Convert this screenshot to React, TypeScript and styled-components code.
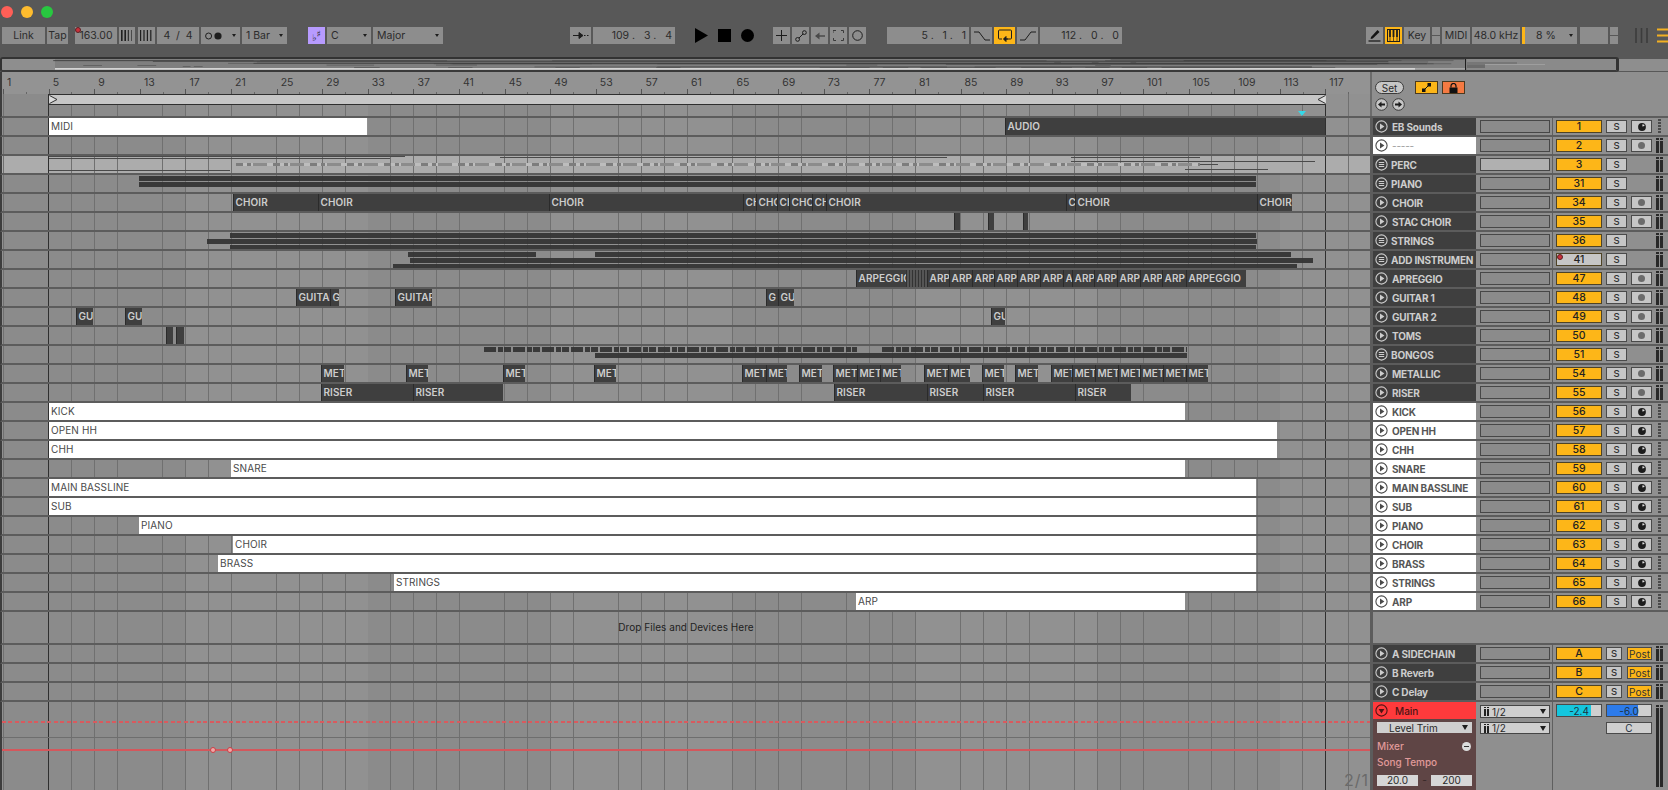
import React, { FC } from "react";
import styled, { createGlobalStyle, css } from "styled-components";

type ClipDef = { from: number; to: number; label?: string; dense?: boolean };
type NoteDef = { from: number; to: number; top: number; h: number; thin?: boolean };
type TrackDef = {
  name: string;
  num: string;
  icon: "play" | "group";
  white?: boolean;
  selected?: boolean;
  armed?: boolean;
  rec?: "note" | "dot";
  clips?: ClipDef[];
  notes?: NoteDef[];
  dashes?: { from: number; to: number; top: number; gaps?: boolean }[];
};

const LANE_X = 2;
const FONT = `Inter, "Liberation Sans", sans-serif`;

const chain = (stops: number[], labels: (string | undefined)[]): ClipDef[] =>
  labels.map((label, i) => ({ from: stops[i], to: stops[i + 1], label }));

const tracks: TrackDef[] = [
  { name: "EB Sounds", num: "1", icon: "play", rec: "note", clips: [{ from: 1005, to: 1325, label: "AUDIO" }] },
  { name: "-----", num: "2", icon: "play", white: true, rec: "dot" },
  {
    name: "PERC",
    num: "3",
    icon: "group",
    selected: true,
    notes: [
      { from: 49, to: 405, top: 0, h: 1, thin: true },
      { from: 49, to: 390, top: 2, h: 1, thin: true },
      { from: 49, to: 230, top: 14, h: 1, thin: true },
      { from: 500, to: 947, top: 1, h: 1, thin: true },
      { from: 1071, to: 1200, top: 1, h: 1, thin: true },
      { from: 1071, to: 1315, top: 5, h: 1, thin: true },
      { from: 1000, to: 1218, top: 8, h: 1, thin: true },
      { from: 1185, to: 1268, top: 13, h: 1, thin: true },
    ],
    dashes: [{ from: 236, to: 1200, top: 7 }],
  },
  {
    name: "PIANO",
    num: "31",
    icon: "group",
    notes: [
      { from: 139, to: 1256, top: 1, h: 5 },
      { from: 139, to: 1256, top: 7, h: 5 },
    ],
  },
  {
    name: "CHOIR",
    num: "34",
    icon: "play",
    rec: "dot",
    clips: chain(
      [233, 318, 549, 743, 756, 777, 789, 812, 826, 1066, 1075, 1257, 1292],
      ["CHOIR", "CHOIR", "CHOIR", "CH", "CHO", "CH", "CHO", "CH", "CHOIR", "C", "CHOIR", "CHOIR"]
    ),
  },
  {
    name: "STAC CHOIR",
    num: "35",
    icon: "play",
    rec: "dot",
    clips: [
      { from: 954, to: 960 },
      { from: 988, to: 994 },
      { from: 1023, to: 1028 },
    ],
  },
  {
    name: "STRINGS",
    num: "36",
    icon: "group",
    notes: [
      { from: 230, to: 1256, top: 1, h: 5 },
      { from: 207, to: 1257, top: 7, h: 5 },
      { from: 230, to: 1256, top: 13, h: 4 },
    ],
  },
  {
    name: "ADD INSTRUMEN",
    num: "41",
    icon: "group",
    armed: true,
    notes: [
      { from: 408, to: 536, top: 1, h: 5 },
      { from: 595, to: 1291, top: 1, h: 5 },
      { from: 410, to: 1313, top: 7, h: 5 },
      { from: 393, to: 1297, top: 13, h: 4 },
    ],
  },
  {
    name: "APREGGIO",
    num: "47",
    icon: "play",
    rec: "dot",
    clips: [
      { from: 856, to: 906, label: "ARPEGGIO" },
      { from: 906, to: 927, dense: true },
      ...chain(
        [927, 949, 972, 994, 1017, 1040, 1063, 1072, 1094, 1117, 1140, 1162, 1186, 1246],
        ["ARP", "ARP", "ARP", "ARP", "ARP", "ARP", "A", "ARP", "ARP", "ARP", "ARP", "ARP", "ARPEGGIO"]
      ),
    ],
  },
  {
    name: "GUITAR 1",
    num: "48",
    icon: "play",
    rec: "dot",
    clips: [
      { from: 296, to: 330, label: "GUITAR" },
      { from: 330, to: 339, label: "G" },
      { from: 395, to: 432, label: "GUITAR" },
      { from: 766, to: 778, label: "G" },
      { from: 778, to: 794, label: "GU" },
    ],
  },
  {
    name: "GUITAR 2",
    num: "49",
    icon: "play",
    rec: "dot",
    clips: [
      { from: 76, to: 93, label: "GU" },
      { from: 125, to: 142, label: "GU" },
      { from: 991, to: 1005, label: "GU" },
    ],
  },
  {
    name: "TOMS",
    num: "50",
    icon: "play",
    rec: "dot",
    clips: [
      { from: 166, to: 173 },
      { from: 176, to: 184 },
    ],
  },
  {
    name: "BONGOS",
    num: "51",
    icon: "group",
    notes: [{ from: 595, to: 1187, top: 7, h: 5 }],
    dashes: [
      { from: 484, to: 857, top: 1, gaps: true },
      { from: 882, to: 1187, top: 1, gaps: true },
    ],
  },
  {
    name: "METALLIC",
    num: "54",
    icon: "play",
    rec: "dot",
    clips: [
      { from: 321, to: 344, label: "MET" },
      { from: 406, to: 428, label: "MET" },
      { from: 503, to: 525, label: "MET" },
      { from: 594, to: 616, label: "MET" },
      ...chain([742, 766, 787], ["MET", "MET"]),
      { from: 799, to: 822, label: "MET" },
      ...chain([833, 857, 880, 901], ["MET", "MET", "MET"]),
      ...chain([924, 948, 970], ["MET", "MET"]),
      { from: 982, to: 1004, label: "MET" },
      { from: 1015, to: 1038, label: "MET" },
      ...chain(
        [1051, 1072, 1095, 1118, 1140, 1163, 1186, 1208],
        ["MET", "MET", "MET", "MET", "MET", "MET", "MET"]
      ),
    ],
  },
  {
    name: "RISER",
    num: "55",
    icon: "play",
    rec: "dot",
    clips: [
      ...chain([321, 413, 503], ["RISER", "RISER"]),
      ...chain([834, 927, 983, 1075, 1131], ["RISER", "RISER", "RISER", "RISER"]),
    ],
  },
  { name: "KICK", num: "56", icon: "play", white: true, rec: "note", clips: [{ from: 49, to: 1185, label: "KICK" }] },
  { name: "OPEN HH", num: "57", icon: "play", white: true, rec: "note", clips: [{ from: 49, to: 1277, label: "OPEN HH" }] },
  { name: "CHH", num: "58", icon: "play", white: true, rec: "note", clips: [{ from: 49, to: 1277, label: "CHH" }] },
  { name: "SNARE", num: "59", icon: "play", white: true, rec: "note", clips: [{ from: 231, to: 1185, label: "SNARE" }] },
  { name: "MAIN BASSLINE", num: "60", icon: "play", white: true, rec: "note", clips: [{ from: 49, to: 1256, label: "MAIN BASSLINE" }] },
  { name: "SUB", num: "61", icon: "play", white: true, rec: "note", clips: [{ from: 49, to: 1256, label: "SUB" }] },
  { name: "PIANO", num: "62", icon: "play", white: true, rec: "note", clips: [{ from: 139, to: 1256, label: "PIANO" }] },
  { name: "CHOIR", num: "63", icon: "play", white: true, rec: "note", clips: [{ from: 233, to: 1256, label: "CHOIR" }] },
  { name: "BRASS", num: "64", icon: "play", white: true, rec: "note", clips: [{ from: 218, to: 1256, label: "BRASS" }] },
  { name: "STRINGS", num: "65", icon: "play", white: true, rec: "note", clips: [{ from: 394, to: 1256, label: "STRINGS" }] },
  { name: "ARP", num: "66", icon: "play", white: true, rec: "note", clips: [{ from: 856, to: 1185, label: "ARP" }] },
];

const rulerBars = Array.from({ length: 30 }, (_, i) => 1 + i * 4);

const GlobalStyle = createGlobalStyle`
  html, body {
    margin: 0;
    background: #585858;
    overflow: hidden;
  }
  * {
    box-sizing: border-box;
  }
`;

const Page = styled.div`
  width: 1668px;
  height: 790px;
  display: flex;
  flex-direction: column;
  background: #585858;
  font-family: ${FONT};
  font-size: 10px;
  color: #2a2a2a;
  overflow: hidden;
`;

const TitleBar = styled.div`
  height: 27px;
  flex: none;
  display: flex;
  gap: 8px;
  padding: 6px 0 0 1px;
`;

const Light = styled.span<{ $color: string }>`
  width: 12px;
  height: 12px;
  border-radius: 50%;
  background: ${(p) => p.$color};
`;

const Toolbar = styled.div`
  height: 30px;
  flex: none;
  display: flex;
  align-items: flex-start;
  gap: 2px;
  padding-left: 2px;
`;

const Btn = styled.div<{ $w: number; $ml?: number; $on?: boolean; $bare?: boolean; $right?: boolean; $split?: boolean }>`
  position: relative;
  flex: none;
  width: ${(p) => p.$w}px;
  height: 17px;
  margin-left: ${(p) => p.$ml ?? 0}px;
  display: flex;
  align-items: center;
  justify-content: ${(p) => (p.$right ? "flex-end" : "center")};
  padding-right: ${(p) => (p.$right ? 3 : 0)}px;
  background: ${(p) => (p.$bare ? "transparent" : p.$on ? "#fdb618" : "#8d8d8d")};
  color: #2b2b2b;
  font-size: 10.5px;
  white-space: pre;
  ${(p) =>
    p.$split &&
    css`
      background: linear-gradient(#8d8d8d 0 8px, #585858 8px 9px, #8d8d8d 9px);
    `}
`;

const KeyBtn = styled(Btn)`
  background: #b79bff;
  color: #222;
  font-family: "DejaVu Sans", sans-serif;
  font-size: 9px;
  font-weight: 700;
`;

const KeyGlyph = styled.span<{ $up?: boolean }>`
  transform: translateY(${(p) => (p.$up ? -2 : 2)}px);
`;

const DropBtn = styled(Btn)`
  justify-content: space-between;
  padding: 0 4px;
`;

const Caret = styled.span`
  width: 0;
  height: 0;
  border-left: 2.5px solid transparent;
  border-right: 2.5px solid transparent;
  border-top: 3.5px solid #1d1d1d;
`;

const RedDot = styled.span`
  position: absolute;
  left: 0;
  top: 0;
  width: 6px;
  height: 6px;
  border-radius: 50%;
  background: #c8303a;
  border: 1px solid #5b2024;
`;

const CpuStrip = styled.span`
  position: absolute;
  left: 0;
  top: 0;
  width: 3px;
  height: 17px;
  background: #fdb618;
`;

const Overview = styled.div`
  height: 15px;
  flex: none;
  display: flex;
`;

const OverviewTrack = styled.div`
  width: 1619px;
  height: 15px;
  background: #7f7f7f;
  border: 2px solid #333;
  border-right-width: 3px;
  border-radius: 3px;
  border-bottom-color: #3a3a3a;
  overflow: hidden;
`;

const OverviewTail = styled.div`
  flex: 1;
  margin: 2px 0 1px;
  background: #8e8e8e;
`;

const TopArea = styled.div`
  height: 46px;
  flex: none;
  display: flex;
  border-bottom: 2px solid #5c5c5c;
  border-left: 2px solid #3d3d3d;
`;

const TopLeft = styled.div`
  width: 1368px;
  flex: none;
  display: flex;
  flex-direction: column;
`;

const Ruler = styled.div`
  height: 22px;
  flex: none;
  display: flex;
  align-items: flex-end;
  padding-left: 1.1px;
  background: #939393;
`;

const RulerMark = styled.div`
  position: relative;
  flex: 0 0 45.6px;
  height: 17px;
  padding-left: 4px;
  line-height: 12px;
  font-size: 10.5px;
  color: #333;
  &::before {
    content: "";
    position: absolute;
    left: 0;
    bottom: 0;
    width: 1px;
    height: 5px;
    background: #555;
  }
  &::after {
    content: "";
    position: absolute;
    left: 22.8px;
    bottom: 0;
    width: 1px;
    height: 2px;
    background: #666;
  }
`;

const Lane = styled.div<{ $selected?: boolean; $h?: number }>`
  position: relative;
  flex: none;
  width: 1368px;
  height: ${(p) => (p.$h ? `${p.$h}px` : "100%")};
  background-image: linear-gradient(90deg, transparent 46.4px, #2f2f2f 46.4px 47.4px, transparent 47.4px 1323.2px, #2f2f2f 1323.2px 1324.2px, transparent 1324.2px),
    repeating-linear-gradient(90deg, transparent 0 0.8px, #707070 0.8px 1.6px, transparent 1.6px 22.8px),
    ${(p) =>
      p.$selected
        ? "linear-gradient(#acacac, #acacac)"
        : "repeating-linear-gradient(90deg, #8b8b8b 1.1px, #8b8b8b 183.5px, #919191 183.5px, #919191 365.9px)"};
`;

const LoopBar = styled.div`
  position: absolute;
  left: 46.7px;
  top: 0;
  width: 1277px;
  height: 11px;
  background: #c6c6c6;
  border-top: 1px solid #2f2f2f;
  border-bottom: 1px solid #2f2f2f;
  display: flex;
  align-items: center;
  justify-content: space-between;
`;

const CueMarker = styled.span`
  position: absolute;
  left: 1296px;
  top: 17px;
  width: 0;
  height: 0;
  border-left: 4px solid transparent;
  border-right: 4px solid transparent;
  border-top: 5px solid #35d8e8;
`;

const TopRight = styled.div`
  flex: 1;
  background: #8f8f8f;
  border-left: 2px solid #6c6c6c;
  padding: 9px 0 0 3px;
`;

const ControlRow = styled.div`
  display: flex;
  align-items: center;
  height: 13px;
`;

const SetBtn = styled.div`
  width: 29px;
  height: 13px;
  border-radius: 7px;
  border: 1px solid #3a3a3a;
  background: #c6c6c6;
  display: flex;
  align-items: center;
  justify-content: center;
  font-size: 10px;
`;

const SquareBtn = styled.div<{ $bg: string; $ml: number }>`
  width: 23px;
  height: 13px;
  margin-left: ${(p) => p.$ml}px;
  border: 1px solid #4a3a20;
  background: ${(p) => p.$bg};
  display: flex;
  align-items: center;
  justify-content: center;
`;

const ArrowRow = styled(ControlRow)`
  gap: 4px;
  margin-top: 4px;
`;

const Row = styled.div<{ $h?: number }>`
  display: flex;
  flex: none;
  height: ${(p) => p.$h ?? 19}px;
  border-bottom: 2px solid #5c5c5c;
  border-left: 2px solid #3d3d3d;
`;

const Panel = styled.div`
  flex: 1;
  display: flex;
  align-items: center;
  background: #8f8f8f;
  border-left: 3px solid #5c5c5c;
`;

const Head = styled.div<{ $white?: boolean }>`
  flex: none;
  width: 103px;
  height: 100%;
  display: flex;
  align-items: center;
  gap: 3px;
  padding-left: 2px;
  background: ${(p) => (p.$white ? "#fff" : "#3f3f3f")};
  color: ${(p) => (p.$white ? "#565656" : "#cdcdcd")};
  font-size: 10px;
  font-weight: 700;
  letter-spacing: -0.2px;
  white-space: nowrap;
  overflow: hidden;
`;

const HeadName = styled.span<{ $group?: boolean; $dim?: boolean }>`
  margin-left: ${(p) => (p.$group ? 0 : 1)}px;
  ${(p) =>
    p.$dim &&
    css`
      color: #9a9a9a;
      font-weight: 400;
    `}
`;

const Inset = styled.div<{ $selected?: boolean }>`
  flex: none;
  width: 70px;
  height: 13px;
  margin-left: 4px;
  background: ${(p) => (p.$selected ? "#b0b0b0" : "#8b8b8b")};
  border: 1px solid #474747;
`;

const ColumnRule = styled.span`
  flex: none;
  align-self: stretch;
  width: 1px;
  margin: 0 3px 0 2px;
  background: #5f5f5f;
`;

const TrackNum = styled.div<{ $off?: boolean }>`
  position: relative;
  flex: none;
  width: 46px;
  height: 13px;
  display: flex;
  align-items: center;
  justify-content: center;
  background: ${(p) => (p.$off ? "#c6c6c6" : "#fdb618")};
  border: 1px solid #4e4326;
  color: #222;
  font-size: 10.5px;
  font-weight: 500;
`;

const SoloBtn = styled.div<{ $w?: number }>`
  flex: none;
  width: ${(p) => p.$w ?? 21}px;
  height: 13px;
  margin-left: 4px;
  display: flex;
  align-items: center;
  justify-content: center;
  background: #c6c6c6;
  border: 1px solid #4a4a4a;
  color: #333;
  font-size: 9.5px;
  font-weight: 500;
`;

const RecBtn = styled(SoloBtn)``;

const NoRec = styled.span`
  flex: none;
  width: 21px;
  margin-left: 4px;
`;

const PostBtn = styled(SoloBtn)`
  margin-left: 5px;
  background: #fdb618;
  font-size: 10px;
  font-weight: 400;
`;

const RecDot = styled.span`
  width: 7px;
  height: 7px;
  border-radius: 50%;
  background: #6b6b6b;
`;

const Grip = styled.div<{ $h?: number }>`
  flex: none;
  width: 7px;
  height: ${(p) => p.$h ?? 15}px;
  margin-left: 4px;
  display: flex;
  justify-content: space-between;
`;

const GripBar = styled.span`
  width: 3px;
  height: 100%;
  background: linear-gradient(#282828 0 2px, transparent 2px 3px, #282828 3px);
`;

const GripDots = styled.span`
  width: 3px;
  height: 100%;
  margin: 0 auto;
  background: repeating-linear-gradient(#4a4a4a 0 2px, transparent 2px 3px);
`;

const ClipBox = styled.div<{ $white?: boolean; $dense?: boolean }>`
  position: absolute;
  top: 0;
  height: 17px;
  padding-left: ${(p) => (p.$white ? 2 : 1.5)}px;
  line-height: 17px;
  overflow: hidden;
  white-space: nowrap;
  font-size: 10px;
  letter-spacing: 0.1px;
  background: ${(p) => (p.$white ? "#fff" : "#3f3f3f")};
  color: ${(p) => (p.$white ? "#4a4a4a" : "#cdcdcd")};
  font-weight: ${(p) => (p.$white ? 400 : 600)};
  border-left: ${(p) => (p.$white ? "none" : "1px solid #2b2b2b")};
  ${(p) =>
    p.$dense &&
    css`
      background: repeating-linear-gradient(90deg, #333 0 1px, #555 1px 3px);
      border-left: none;
    `}
`;

const NoteBar = styled.div<{ $thin?: boolean }>`
  position: absolute;
  background: ${(p) => (p.$thin ? "#4a4a4a" : "rgba(50, 50, 50, 0.92)")};
`;

const DashBar = styled.div<{ $gaps?: boolean }>`
  position: absolute;
  height: ${(p) => (p.$gaps ? 5 : 3)}px;
  background: ${(p) =>
    p.$gaps
      ? "repeating-linear-gradient(90deg, rgba(50,50,50,.92) 0 12px, transparent 12px 14px, rgba(50,50,50,.92) 14px 19px, transparent 19px 20px, rgba(50,50,50,.92) 20px 27px, transparent 27px 29px)"
      : "repeating-linear-gradient(90deg, #7d7d7d 0 7px, #bdbdbd 7px 11px, #7d7d7d 11px 15px, #bdbdbd 15px 17px, #8c8c8c 17px 31px, #bdbdbd 31px 37px)"};
`;

const DropZone = styled(Lane)`
  display: flex;
  align-items: center;
  justify-content: center;
  padding-bottom: 1px;
  color: #222;
  font-size: 10px;
  letter-spacing: 0.05px;
`;

const DropPanel = styled.div`
  flex: 1;
  background: #8f8f8f;
  border-left: 3px solid #5c5c5c;
`;

const MasterRow = styled.div`
  display: flex;
  flex: 1;
  min-height: 0;
  border-left: 2px solid #3d3d3d;
`;

const MasterPanel = styled.div`
  flex: 1;
  display: flex;
  background: #8f8f8f;
  border-left: 3px solid #5c5c5c;
`;

const MasterHeadCol = styled.div`
  flex: none;
  width: 103px;
  display: flex;
  flex-direction: column;
`;

const MainHead = styled.div`
  height: 17px;
  flex: none;
  display: flex;
  align-items: center;
  gap: 7px;
  padding-left: 2px;
  background: #ff3a3c;
  color: #4d1414;
  font-size: 10px;
  font-weight: 500;
`;

const Device = styled.div`
  flex: 1;
  display: flex;
  flex-direction: column;
  padding: 3px 4px 0;
  background: #5f4545;
  color: #e19a9a;
  font-size: 10px;
  font-weight: 500;
`;

const Select = styled.div<{ $h?: number }>`
  flex: none;
  width: 100%;
  height: ${(p) => p.$h ?? 12}px;
  display: flex;
  align-items: center;
  justify-content: space-between;
  padding: 0 3px;
  background: #cfcfcf;
  border: 1px solid #454545;
  color: #2a2a2a;
  font-size: 10px;
  font-weight: 400;
`;

const LevelSelect = styled(Select)`
  padding-left: 11px;
  border-color: transparent;
  height: 11px;
`;

const BlackCaret = styled(Caret)`
  border-left-width: 3.5px;
  border-right-width: 3.5px;
  border-top-width: 5px;
`;

const DeviceLine = styled.div<{ $mt: number }>`
  margin-top: ${(p) => p.$mt}px;
  height: 12px;
  line-height: 12px;
  display: flex;
  justify-content: space-between;
  align-items: center;
`;

const MinusBtn = styled.span`
  position: relative;
  width: 9px;
  height: 9px;
  margin-right: 1px;
  border-radius: 50%;
  background: #dcdcdc;
  &::after {
    content: "";
    position: absolute;
    left: 2px;
    right: 2px;
    top: 4px;
    height: 1px;
    background: #333;
  }
`;

const RangeRow = styled.div`
  margin-top: 6px;
  display: flex;
  align-items: center;
  justify-content: space-between;
  color: #3a2a2a;
`;

const RangeBox = styled.div`
  width: 41px;
  height: 11px;
  display: flex;
  align-items: center;
  justify-content: center;
  background: #d6d6d6;
  color: #2a2a2a;
  font-size: 10px;
  font-weight: 400;
`;

const RouteCol = styled.div`
  flex: none;
  width: 70px;
  margin-left: 4px;
  display: flex;
  flex-direction: column;
  gap: 4px;
  padding-top: 3px;
`;

const RouteLabel = styled.span`
  display: flex;
  align-items: center;
  gap: 3px;
`;

const TwinBars = styled.span`
  width: 5px;
  height: 9px;
  display: flex;
  justify-content: space-between;
  &::before,
  &::after {
    content: "";
    width: 2px;
    background: linear-gradient(#222 0 1px, transparent 1px 2px, #222 2px);
  }
`;

const MeterCol = styled.div`
  flex: none;
  width: 96px;
  padding-top: 2px;
  display: grid;
  grid-template-columns: 46px 46px;
  grid-template-rows: 13px 12px;
  column-gap: 4px;
  row-gap: 5px;
`;

const ValueBox = styled.div<{ $fill?: string; $pct?: number }>`
  display: flex;
  align-items: center;
  justify-content: center;
  border: 1px solid #4a4a4a;
  color: #1f3340;
  font-size: 10px;
  background: ${(p) =>
    p.$fill
      ? `linear-gradient(90deg, ${p.$fill} ${p.$pct}%, #cfcfcf ${p.$pct}%)`
      : "#cfcfcf"};
`;

const MasterGrip = styled(Grip)`
  margin-top: 3px;
  align-self: flex-start;
`;

const RedDash = styled.div`
  position: absolute;
  left: 0;
  right: 0;
  top: 19px;
  height: 1.5px;
  background: repeating-linear-gradient(90deg, #d95a5e 0 4px, transparent 4px 6.5px);
`;

const ThinLine = styled.div`
  position: absolute;
  left: 0;
  right: 0;
  top: 35px;
  height: 1px;
  background: #6e6e6e;
`;

const RedLine = styled.div`
  position: absolute;
  left: 0;
  right: 0;
  top: 47px;
  height: 2px;
  background: #d4575c;
`;

const Breakpoint = styled.span`
  position: absolute;
  top: -2px;
  width: 6px;
  height: 6px;
  border-radius: 50%;
  background: #f0a8a8;
  border: 1.5px solid #c93f46;
`;

const GridLabel = styled.div`
  position: absolute;
  right: 1px;
  top: 69px;
  font-size: 16px;
  letter-spacing: 1px;
  line-height: 18px;
  color: #6a6a6a;
`;

const RoundIcon: FC<{ kind: "play" | "group"; color: string }> = ({ kind, color }) => (
  <svg width="13" height="13" viewBox="0 0 13 13" style={{ flex: "none" }}>
    <circle cx="6.5" cy="6.5" r="5.6" fill="none" stroke={color} strokeWidth="1.1" />
    {kind === "play" ? (
      <path d="M5 3.6 L9.4 6.5 L5 9.4 Z" fill={color} />
    ) : (
      <path d="M3.8 4.5 H9.2 M3.8 6.5 H9.2 M3.8 8.5 H9.2" stroke={color} strokeWidth="1" fill="none" />
    )}
  </svg>
);

const NoteIcon = () => (
  <svg width="8" height="8" viewBox="0 0 8 8">
    <circle cx="4" cy="4" r="3.9" fill="#1c1c1c" />
    <path d="M4.4 1.2 V3.6 L6.4 3 V1.8 Z" fill="#dedede" />
  </svg>
);

const NavIcon: FC<{ dir: "left" | "right" }> = ({ dir }) => (
  <svg width="13" height="13" viewBox="0 0 13 13">
    <circle cx="6.5" cy="6.5" r="5.8" fill="#c6c6c6" stroke="#3a3a3a" />
    <path
      d={dir === "left" ? "M3 6.5 L6.5 3.5 V5.5 H10 V7.5 H6.5 V9.5 Z" : "M10 6.5 L6.5 3.5 V5.5 H3 V7.5 H6.5 V9.5 Z"}
      fill="#1c1c1c"
    />
  </svg>
);

const Bars: FC<{ weights: number[] }> = ({ weights }) => (
  <svg width="13" height="11" viewBox="0 0 13 11">
    {weights.map((w, i) => (
      <rect key={i} x={i * 3.4} y="0" width={w} height="11" fill="#1f1f1f" />
    ))}
  </svg>
);

const OverviewMap = () => {
  const ox = (x: number) => 53 + (x - 48.7) * 1.106 - 2;
  const rects: React.ReactNode[] = [];
  tracks.forEach((t, i) => {
    if (t.white) return;
    const y = i * 0.62 + 0.2;
    [...(t.clips ?? []), ...(t.notes ?? []), ...(t.dashes ?? [])].forEach((c, j) => {
      rects.push(
        <rect
          key={`${i}-${j}`}
          x={ox(c.from)}
          y={y}
          width={Math.max(1, (c.to - c.from) * 1.106)}
          height="0.6"
          fill="#3f3f3f"
          opacity="0.7"
        />
      );
    });
  });
  return (
    <svg width="1614" height="11" viewBox="0 0 1614 11" style={{ display: "block" }}>
      <rect x="0" y="0" width="53" height="11" fill="#8e8e8e" />
      {rects}
      <rect x="53" y="9.2" width="1360" height="1.4" fill="#e8e8e8" />
      <rect x="1413" y="9.4" width="50" height="1" fill="#bdbdbd" />
      <rect x="1465" y="0" width="150" height="11" fill="#8a8a8a" />
      <rect x="1465" y="3" width="50" height="3" fill="#777" />
      <rect x="1465" y="6" width="18" height="3" fill="#6c6c6c" />
      <rect x="1483" y="5" width="60" height="1" fill="#9e9e9e" />
      <rect x="1463" y="0" width="1" height="11" fill="#1e1e1e" />
    </svg>
  );
};

const TrackLane: FC<{ track: TrackDef }> = ({ track }) => (
  <Lane $selected={track.selected}>
    {track.notes?.map((n, i) => (
      <NoteBar
        key={i}
        $thin={n.thin}
        style={{ left: n.from - LANE_X, width: n.to - n.from, top: n.top, height: n.h }}
      />
    ))}
    {track.dashes?.map((d, i) => (
      <DashBar key={i} $gaps={d.gaps} style={{ left: d.from - LANE_X, width: d.to - d.from, top: d.top }} />
    ))}
    {track.clips?.map((c, i) => (
      <ClipBox key={i} $white={track.white} $dense={c.dense} style={{ left: c.from - LANE_X, width: c.to - c.from }}>
        {c.label}
      </ClipBox>
    ))}
    {track.name === "EB Sounds" && (
      <ClipBox $white style={{ left: 49 - LANE_X, width: 318 }}>
        MIDI
      </ClipBox>
    )}
  </Lane>
);

const TrackRow: FC<{ track: TrackDef }> = ({ track }) => (
  <Row>
    <TrackLane track={track} />
    <Panel>
      <Head $white={track.white}>
        <RoundIcon kind={track.icon} color={track.white ? "#4a4a4a" : "#cdcdcd"} />
        <HeadName $group={track.icon === "group"} $dim={track.name === "-----"}>
          {track.name}
        </HeadName>
      </Head>
      <Inset $selected={track.selected} />
      <ColumnRule />
      <TrackNum $off={track.armed}>
        {track.armed && <RedDot />}
        {track.num}
      </TrackNum>
      <SoloBtn>S</SoloBtn>
      {track.rec ? <RecBtn>{track.rec === "note" ? <NoteIcon /> : <RecDot />}</RecBtn> : <NoRec />}
      <Grip>
        {track.rec === "note" ? (
          <GripDots />
        ) : (
          <>
            <GripBar />
            <GripBar />
          </>
        )}
      </Grip>
    </Panel>
  </Row>
);

const ReturnRow: FC<{ name: string; letter: string }> = ({ name, letter }) => (
  <Row>
    <Lane />
    <Panel>
      <Head>
        <RoundIcon kind="play" color="#cdcdcd" />
        <HeadName>{name}</HeadName>
      </Head>
      <Inset />
      <ColumnRule />
      <TrackNum>{letter}</TrackNum>
      <SoloBtn $w={16}>S</SoloBtn>
      <PostBtn $w={25}>Post</PostBtn>
      <Grip>
        <GripBar />
        <GripBar />
      </Grip>
    </Panel>
  </Row>
);

export default function App() {
  return (
    <Page>
      <GlobalStyle />
      <TitleBar>
        <Light $color="#ff5f57" />
        <Light $color="#febc2e" />
        <Light $color="#28c840" />
      </TitleBar>

      <Toolbar>
        <Btn $w={43}>Link</Btn>
        <Btn $w={21}>Tap</Btn>
        <Btn $w={42} $ml={5}>
          <RedDot />
          163.00
        </Btn>
        <Btn $w={16}>
          <Bars weights={[1.6, 1.6, 1, 0.6]} />
        </Btn>
        <Btn $w={17} $ml={1}>
          <Bars weights={[1.2, 1.2, 1.2, 1.2]} />
        </Btn>
        <Btn $w={42}>4  /  4</Btn>
        <DropBtn $w={39}>
          <svg width="18" height="8" viewBox="0 0 18 8">
            <circle cx="3.6" cy="4" r="3" fill="none" stroke="#1f1f1f" />
            <circle cx="13" cy="4" r="3.6" fill="#1f1f1f" />
          </svg>
          <Caret />
        </DropBtn>
        <DropBtn $w={45}>
          1 Bar
          <Caret />
        </DropBtn>
        <KeyBtn $w={17} $ml={19}>
          <KeyGlyph>♭</KeyGlyph>
          <KeyGlyph $up>♯</KeyGlyph>
        </KeyBtn>
        <DropBtn $w={44}>
          C
          <Caret />
        </DropBtn>
        <DropBtn $w={70}>
          Major
          <Caret />
        </DropBtn>

        <Btn $w={21} $ml={125}>
          <svg width="16" height="9" viewBox="0 0 16 9">
            <path d="M0 4.5 H6 M6 1.5 L10 4.5 L6 7.5 Z" fill="#1d1d1d" stroke="#1d1d1d" />
            <path d="M11 4.5 H16" stroke="#1d1d1d" strokeDasharray="1.5 1.5" />
          </svg>
        </Btn>
        <Btn $w={82} $right>
          109 .   3 .   4
        </Btn>
        <Btn $w={13} $ml={18} $bare>
          <svg width="13" height="15" viewBox="0 0 13 15">
            <path d="M0 0 L13 7.5 L0 15 Z" fill="#000" />
          </svg>
        </Btn>
        <Btn $w={13} $ml={8} $bare>
          <svg width="13" height="13" viewBox="0 0 13 13">
            <rect width="13" height="13" fill="#000" />
          </svg>
        </Btn>
        <Btn $w={13} $ml={8} $bare>
          <svg width="13" height="13" viewBox="0 0 13 13">
            <circle cx="6.5" cy="6.5" r="6.5" fill="#000" />
          </svg>
        </Btn>
        <Btn $w={17} $ml={17}>
          <svg width="11" height="11" viewBox="0 0 11 11">
            <path d="M5.5 0 V11 M0 5.5 H11" stroke="#1d1d1d" />
          </svg>
        </Btn>
        <Btn $w={17}>
          <svg width="12" height="12" viewBox="0 0 12 12">
            <circle cx="2.6" cy="9.4" r="1.9" fill="none" stroke="#1d1d1d" />
            <circle cx="9.4" cy="2.6" r="1.9" fill="none" stroke="#1d1d1d" />
            <path d="M4 8 L8 4" stroke="#1d1d1d" />
          </svg>
        </Btn>
        <Btn $w={17}>
          <svg width="10" height="8" viewBox="0 0 10 8">
            <path d="M0 4 L4.5 0.5 V3.3 H10 V4.7 H4.5 V7.5 Z" fill="#4a4a4a" />
          </svg>
        </Btn>
        <Btn $w={17}>
          <svg width="11" height="11" viewBox="0 0 11 11">
            <path d="M0 3 V0.5 H3 M8 0.5 H10.5 V3 M10.5 8 V10.5 H8 M3 10.5 H0.5 V8" fill="none" stroke="#3a3a3a" />
          </svg>
        </Btn>
        <Btn $w={17}>
          <svg width="11" height="11" viewBox="0 0 11 11">
            <circle cx="5.5" cy="5.5" r="4.8" fill="none" stroke="#1d1d1d" />
          </svg>
        </Btn>
        <Btn $w={82} $ml={19} $right>
          5 .   1 .   1
        </Btn>
        <Btn $w={21}>
          <svg width="16" height="10" viewBox="0 0 16 10">
            <path d="M0 1 H5 L11 9 H16" fill="none" stroke="#1d1d1d" />
          </svg>
        </Btn>
        <Btn $w={21} $on>
          <svg width="14" height="13" viewBox="0 0 14 13">
            <path d="M4 10 H1.5 Q0.5 10 0.5 9 V2 Q0.5 1 1.5 1 H12.5 Q13.5 1 13.5 2 V9 Q13.5 10 12.5 10 H8" fill="none" stroke="#1d1d1d" />
            <path d="M10 10 H6 M8 7.5 L5.5 10 L8 12.5 Z" fill="#1d1d1d" stroke="#1d1d1d" />
          </svg>
        </Btn>
        <Btn $w={21}>
          <svg width="16" height="10" viewBox="0 0 16 10">
            <path d="M0 9 H5 L11 1 H16" fill="none" stroke="#1d1d1d" />
          </svg>
        </Btn>
        <Btn $w={82} $right>
          112 .   0 .   0
        </Btn>
        <Btn $w={17} $ml={242}>
          <svg width="13" height="13" viewBox="0 0 13 13">
            <path d="M3 8 L9.5 1 L11.5 3 L4.8 9.6 L2.6 10 Z" fill="#141414" />
            <path d="M0.5 12 H12.5" stroke="#141414" strokeWidth="1.2" />
          </svg>
        </Btn>
        <Btn $w={17} $on>
          <svg width="13" height="13" viewBox="0 0 13 13">
            <rect x="0.5" y="0.5" width="12" height="12" fill="none" stroke="#1d1d1d" />
            <path d="M3 1 V8 M6.5 1 V8 M10 1 V8" stroke="#1d1d1d" strokeWidth="1.8" />
            <path d="M3 8 V12 M6.5 8 V12 M10 8 V12" stroke="#1d1d1d" strokeWidth="0.7" />
          </svg>
        </Btn>
        <Btn $w={26}>Key</Btn>
        <Btn $w={8} $split />
        <Btn $w={28}>MIDI</Btn>
        <Btn $w={48}>48.0 kHz</Btn>
        <DropBtn $w={55}>
          <CpuStrip />
          <span style={{ marginLeft: 10 }}>8 %</span>
          <Caret />
        </DropBtn>
        <Btn $w={28} $ml={1} />
        <Btn $w={8} $split />
        <Btn $w={13} $ml={15} $bare>
          <svg width="13" height="15" viewBox="0 0 13 15">
            <path d="M1 0 V15 M6.5 0 V15 M12 0 V15" stroke="#3c3c3c" strokeWidth="1.6" />
          </svg>
        </Btn>
        <Btn $w={11} $ml={7} $bare>
          <svg width="11" height="15" viewBox="0 0 11 15">
            <path d="M0 1.5 H11 M0 7.5 H11 M0 13.5 H11" stroke="#f3b022" strokeWidth="2" />
          </svg>
        </Btn>
      </Toolbar>

      <Overview>
        <OverviewTrack>
          <OverviewMap />
        </OverviewTrack>
        <OverviewTail />
      </Overview>

      <TopArea>
        <TopLeft>
          <Ruler>
            {rulerBars.map((bar) => (
              <RulerMark key={bar}>{bar}</RulerMark>
            ))}
          </Ruler>
          <Lane $h={22}>
            <LoopBar>
              <svg width="9" height="9" viewBox="0 0 9 9">
                <path d="M0.5 0.5 L8 4.5 L0.5 8.5" fill="#dcdcdc" stroke="#333" />
              </svg>
              <svg width="9" height="9" viewBox="0 0 9 9">
                <path d="M8.5 0.5 L1 4.5 L8.5 8.5" fill="#dcdcdc" stroke="#333" />
              </svg>
            </LoopBar>
            <CueMarker />
          </Lane>
        </TopLeft>
        <TopRight>
          <ControlRow>
            <SetBtn>Set</SetBtn>
            <SquareBtn $bg="#fdb618" $ml={11}>
              <svg width="9" height="9" viewBox="0 0 9 9">
                <path d="M0.5 8.5 L8.5 0.5" stroke="#111" strokeWidth="1" />
                <rect x="0" y="5.5" width="3.5" height="3.5" fill="#111" />
                <rect x="5.5" y="0" width="3.5" height="3.5" fill="#111" />
              </svg>
            </SquareBtn>
            <SquareBtn $bg="#f57a42" $ml={4}>
              <svg width="9" height="10" viewBox="0 0 9 10">
                <path d="M2 4.5 V3 A2.5 2.5 0 0 1 7 3 V4.5" fill="none" stroke="#111" strokeWidth="1.2" />
                <rect x="0.5" y="4.5" width="8" height="5.5" fill="#111" />
              </svg>
            </SquareBtn>
          </ControlRow>
          <ArrowRow>
            <NavIcon dir="left" />
            <NavIcon dir="right" />
          </ArrowRow>
        </TopRight>
      </TopArea>

      {tracks.map((t, i) => (
        <TrackRow key={i} track={t} />
      ))}

      <Row $h={33}>
        <DropZone>Drop Files and Devices Here</DropZone>
        <DropPanel />
      </Row>

      <ReturnRow name="A SIDECHAIN" letter="A" />
      <ReturnRow name="B Reverb" letter="B" />
      <ReturnRow name="C Delay" letter="C" />

      <MasterRow>
        <Lane>
          <RedDash />
          <ThinLine />
          <RedLine>
            <Breakpoint style={{ left: 208 }} />
            <Breakpoint style={{ left: 225 }} />
          </RedLine>
          <GridLabel>2/1</GridLabel>
        </Lane>
        <MasterPanel>
          <MasterHeadCol>
            <MainHead>
              <svg width="13" height="13" viewBox="0 0 13 13" style={{ flex: "none" }}>
                <circle cx="6.5" cy="6.5" r="5.6" fill="none" stroke="#4d1414" strokeWidth="1.1" />
                <path d="M3.6 5 L9.4 5 L6.5 9.4 Z" fill="#4d1414" />
              </svg>
              Main
            </MainHead>
            <Device>
              <LevelSelect>
                Level Trim
                <BlackCaret />
              </LevelSelect>
              <DeviceLine $mt={7}>
                Mixer
                <MinusBtn />
              </DeviceLine>
              <DeviceLine $mt={4}>Song Tempo</DeviceLine>
              <RangeRow>
                <RangeBox>20.0</RangeBox>
                <span>-</span>
                <RangeBox>200</RangeBox>
              </RangeRow>
            </Device>
          </MasterHeadCol>
          <RouteCol>
            <Select $h={13}>
              <RouteLabel>
                <TwinBars />
                1/2
              </RouteLabel>
              <BlackCaret />
            </Select>
            <Select>
              <RouteLabel>
                <TwinBars />
                1/2
              </RouteLabel>
              <BlackCaret />
            </Select>
          </RouteCol>
          <ColumnRule />
          <MeterCol>
            <ValueBox $fill="#14c6de" $pct={78}>
              -2.4
            </ValueBox>
            <ValueBox $fill="#2d7bea" $pct={70}>
              -6.0
            </ValueBox>
            <span />
            <ValueBox>C</ValueBox>
          </MeterCol>
          <MasterGrip $h={82}>
            <GripBar />
            <GripBar />
          </MasterGrip>
        </MasterPanel>
      </MasterRow>
    </Page>
  );
}
